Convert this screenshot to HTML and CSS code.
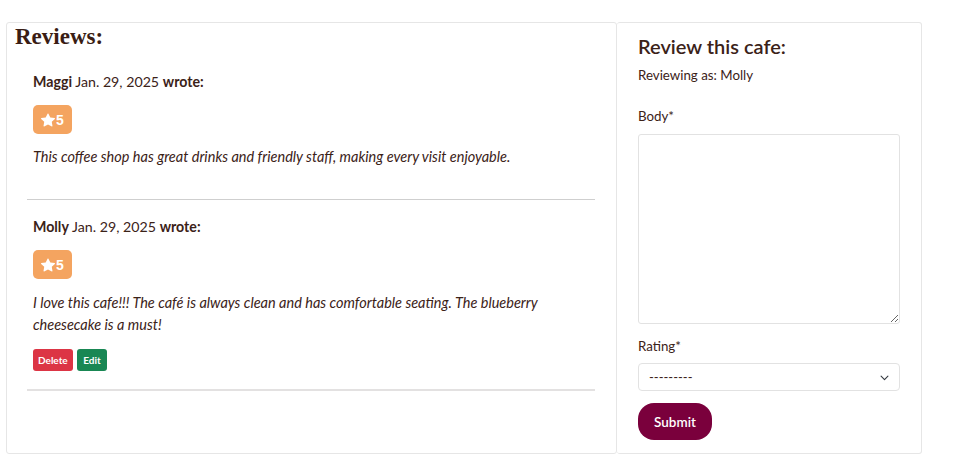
FILE: index.html
```html
<!DOCTYPE html>
<html lang="en">
<head>
<meta charset="utf-8">
<title>Reviews</title>
<link rel="stylesheet" href="styles.css">
</head>
<body>
<div class="layout">
  <section class="card reviews">
    <h2 class="reviews-title">Reviews:</h2>
    <div class="review-list">
      <article class="review">
        <p class="review-head"><strong>Maggi</strong> Jan. 29, 2025 <strong>wrote:</strong></p>
        <span class="badge"><svg class="star" viewBox="0 0 16 16" width="14" height="14"><path d="M3.612 15.443c-.386.198-.824-.149-.746-.592l.83-4.73L.173 6.765c-.329-.314-.158-.888.283-.95l4.898-.696L7.538.792c.197-.39.73-.39.927 0l2.184 4.327 4.898.696c.441.062.612.636.282.95l-3.522 3.356.83 4.73c.078.443-.36.79-.746.592L8 13.187l-4.389 2.256z" fill="#fff"/></svg>5</span>
        <p class="review-body">This coffee shop has great drinks and friendly staff, making every visit enjoyable.</p>
      </article>
      <article class="review review-last">
        <p class="review-head"><strong>Molly</strong> Jan. 29, 2025 <strong>wrote:</strong></p>
        <span class="badge"><svg class="star" viewBox="0 0 16 16" width="14" height="14"><path d="M3.612 15.443c-.386.198-.824-.149-.746-.592l.83-4.73L.173 6.765c-.329-.314-.158-.888.283-.95l4.898-.696L7.538.792c.197-.39.73-.39.927 0l2.184 4.327 4.898.696c.441.062.612.636.282.95l-3.522 3.356.83 4.73c.078.443-.36.79-.746.592L8 13.187l-4.389 2.256z" fill="#fff"/></svg>5</span>
        <p class="review-body">I love this cafe!!! The café is always clean and has comfortable seating. The blueberry cheesecake is a must!</p>
        <div class="actions">
          <button class="btn btn-delete" type="button">Delete</button>
          <button class="btn btn-edit" type="button">Edit</button>
        </div>
      </article>
    </div>
  </section>
  <aside class="card form-card">
    <h3 class="form-title">Review this cafe:</h3>
    <p class="reviewing">Reviewing as: Molly</p>
    <label class="field-label" for="body">Body*</label>
    <textarea id="body" class="textarea"></textarea>
    <label class="field-label label-rating" for="rating">Rating*</label>
    <div class="select">
      <span>---------</span>
      <svg viewBox="0 0 16 16" width="11" height="11"><path d="M3 6l5 5 5-5" fill="none" stroke="#343a40" stroke-width="1.6" stroke-linecap="round" stroke-linejoin="round"/></svg>
    </div>
    <button class="submit" type="button">Submit</button>
  </aside>
</div>
</body>
</html>
```
FILE: styles.css
```css
* { box-sizing: border-box; }
body {
  margin: 0;
  background: #fff;
  color: #3b2218;
  font-family: "Lato", "Liberation Sans", sans-serif;
  font-size: 13px;
}
.layout {
  display: flex;
  align-items: stretch;
  padding: 22px 0 0 6px;
}
.card {
  border: 1px solid #e6e6e6;
  border-radius: 3px;
  height: 432px;
}
.reviews {
  width: 611px;
  padding: 0 0 0 8px;
}
.reviews-title {
  margin: 0;
  font-family: "Liberation Serif", serif;
  font-weight: bold;
  font-size: 23px;
  line-height: 28px;
  color: #3a1d14;
}
.review-list {
  margin: 4px 21px 0 12px;
}
.review {
  padding: 17px 6px 18px;
  border-bottom: 1px solid #cfcfcf;
}
.review-last {
  border-bottom: 2px solid #e3e1e1;
}
.review-head {
  margin: 0 0 13px;
  line-height: 20px;
  font-size: 14.2px;
}
.review-head strong { font-weight: 700; }
.badge {
  display: inline-flex;
  align-items: center;
  gap: 1px;
  height: 29px;
  padding: 0 8px 0 8px;
  border-radius: 5px;
  background: #f4a460;
  color: #fff;
  font-family: "Liberation Sans", sans-serif;
  font-weight: bold;
  font-size: 14px;
}
.star { display: block; }
.review-body {
  margin: 12px 0 13px;
  font-style: italic;
  line-height: 22px;
  font-size: 14.5px;
}
.review-last .review-body { margin-top: 13px; }
.actions {
  display: flex;
  gap: 4px;
}
.btn {
  height: 22px;
  padding: 0 5px;
  border: 0;
  border-radius: 3px;
  color: #fff;
  font-family: "Lato", sans-serif;
  font-weight: bold;
  font-size: 10px;
}
.btn-delete { background: #dc3545; }
.btn-edit { background: #198754; padding: 0 6.5px; }
.form-card {
  width: 305px;
  border-left: 0;
  padding: 11px 21px 0 21px;
  display: flex;
  flex-direction: column;
  align-items: flex-start;
}
.form-title {
  margin: 0;
  font-size: 20px;
  font-weight: 600;
  line-height: 24px;
}
.reviewing {
  margin: 7px 0 0;
  line-height: 20px;
  font-size: 13.3px;
}
.field-label {
  margin-top: 21px;
  line-height: 20px;
  font-size: 13.3px;
}
.textarea {
  margin-top: 8px;
  width: 262px;
  height: 190px;
  border: 1px solid #e2e2e2;
  border-radius: 3px;
  resize: vertical;
}
.label-rating { margin-top: 12px; }
.select {
  margin-top: 7px;
  width: 262px;
  height: 28px;
  border: 1px solid #e2e2e2;
  border-radius: 4px;
  display: flex;
  align-items: center;
  justify-content: space-between;
  padding: 0 9px 0 10px;
  font-size: 13px;
}
.submit {
  margin-top: 12px;
  height: 37px;
  padding: 0 16px;
  border: 0;
  border-radius: 16px;
  background: #7a003c;
  color: #fff;
  font-family: "Lato", sans-serif;
  font-weight: 600;
  font-size: 13.5px;
}
```
